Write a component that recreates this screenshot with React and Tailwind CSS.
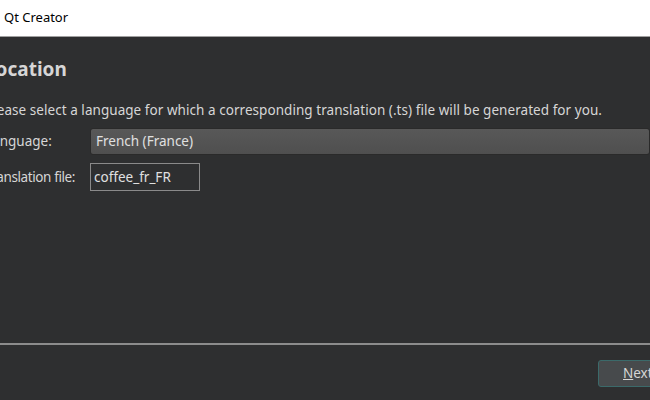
import React from 'react';

export default function App() {
  const font = { fontFamily: '"Segoe UI", "Noto Sans", "Open Sans", sans-serif' };
  return (
    <div className="w-[650px] h-[400px] overflow-hidden bg-[#2e2f30] flex flex-col" style={font}>
      {/* title bar */}
      <div className="h-[37px] bg-white border-b border-[#a0a0a0] flex items-center pl-[4px] shrink-0">
        <span className="text-[13px] text-black">Qt Creator</span>
      </div>

      {/* page */}
      <div className="flex-1 flex flex-col ml-[-15px] text-[#d6d6d6]">
        <h1 className="mt-[20px] text-[19px] font-bold leading-[24px] text-[#d6d6d6]">Location</h1>
        <p className="mt-[20px] text-[13.5px] leading-[18px] whitespace-nowrap tracking-[0.05px]">
          Please select a language for which a corresponding translation (.ts) file will be generated for you.
        </p>
        <div className="mt-[9px] flex flex-col gap-[8px]">
          <div className="flex items-center">
            <span className="w-[105px] shrink-0 text-[13.5px]">Language:</span>
            <div className="flex-1 h-[27px] rounded-[3px] border border-[#2a2a2a] bg-gradient-to-b from-[#585858] to-[#4f4f4f] flex items-center px-[5px] text-[13.5px] text-[#e0e0e0]">
              French (France)
            </div>
          </div>
          <div className="flex items-center">
            <span className="w-[105px] shrink-0 text-[13.5px] tracking-[-0.4px] whitespace-nowrap">Translation file:</span>
            <div className="w-[110px] h-[28px] border border-[#8a8a8a] flex items-center px-[3px] text-[13.5px] text-[#e0e0e0]">
              coffee_fr_FR
            </div>
          </div>
        </div>
      </div>

      {/* bottom */}
      <div className="h-[57px] shrink-0 border-t-2 border-[#8c8c8c] flex justify-end items-start pt-[15px] mr-[-40px]">
        <div className="w-[92px] h-[27px] rounded-[3px] border border-[#3b6a6a] bg-[#474a4c] text-[13.5px] text-[#d6d6d6] flex items-center pl-[24px]">
          <span><span className="underline">N</span>ext &gt;</span>
        </div>
      </div>
    </div>
  );
}
